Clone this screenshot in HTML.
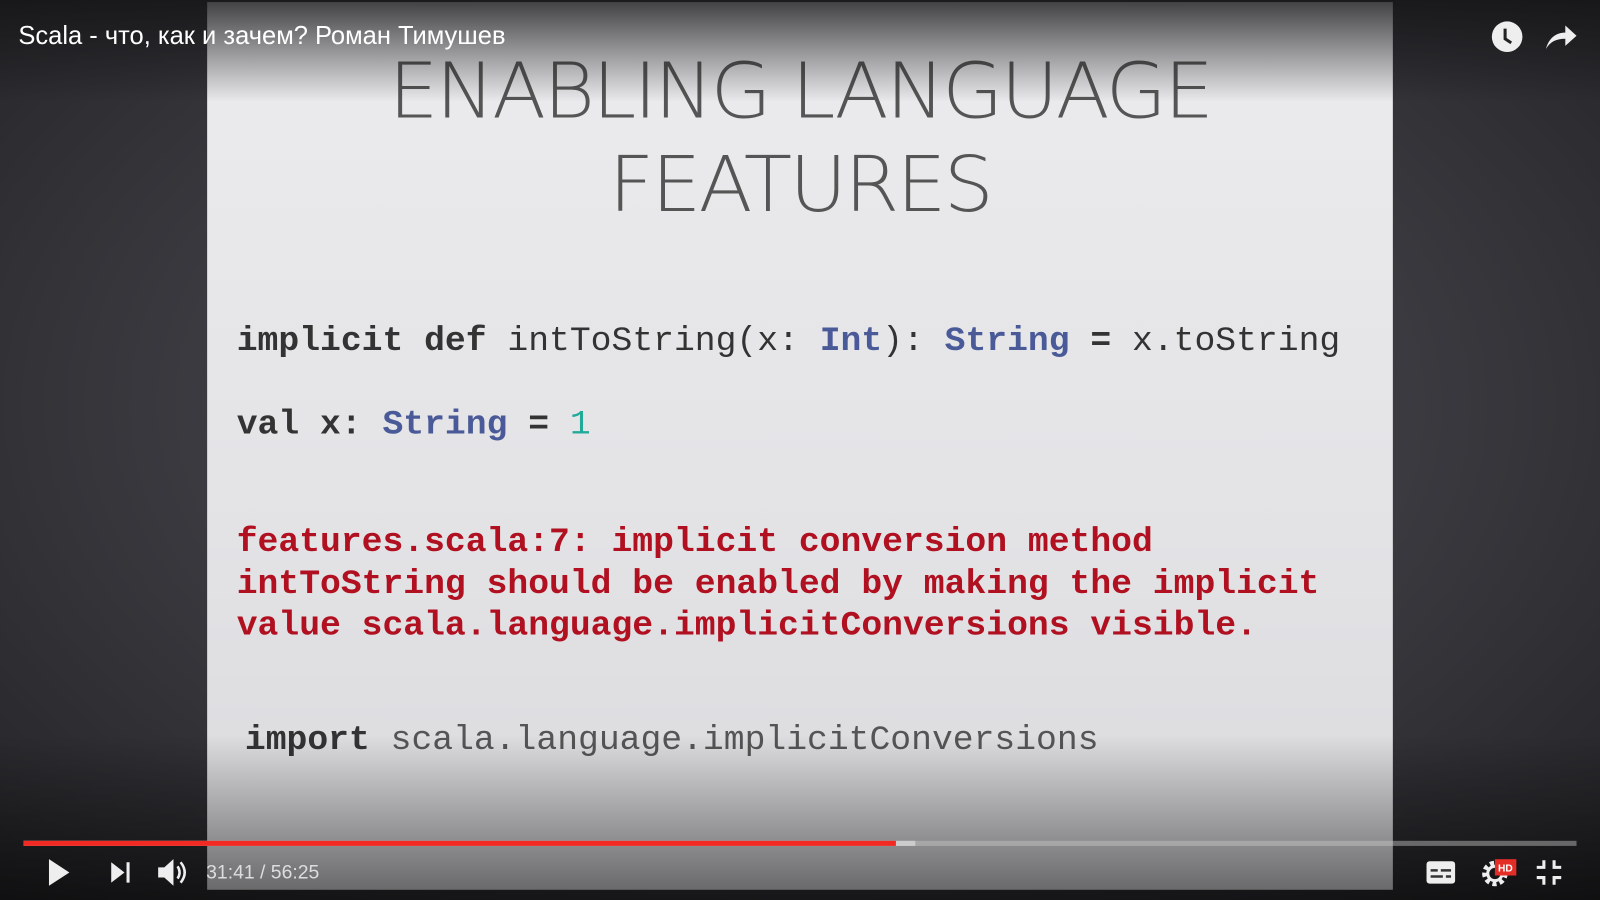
<!DOCTYPE html>
<html><head><meta charset="utf-8"><style>
html,body{margin:0;padding:0;width:1600px;height:900px;overflow:hidden;background:#1a1a1c}
#w{position:absolute;left:0;top:0;width:1568px;height:882px;transform:scale(1.020408);transform-origin:0 0;
background:radial-gradient(ellipse at 50% 45%,#55555a 0%,#3c3c42 50%,#232326 100%);font-family:"Liberation Sans",sans-serif}
#slide{position:absolute;left:203px;top:2px;width:1162px;height:870px;background:linear-gradient(#ececee,#e3e3e6 60%,#dadadd)}
.t{position:absolute;left:0;width:1162px;text-align:center;color:#555;font-family:"DejaVu Sans","Liberation Sans",sans-serif;font-weight:200;font-size:75px;letter-spacing:-2.5px;transform:scaleX(1.03)}
.c{position:absolute;font-family:"Liberation Mono",monospace;font-size:34px;white-space:pre;color:#333}
b{font-weight:bold}
.bl{color:#4a5a98;font-weight:bold}.tl{color:#22aa99}.r{color:#b01020;font-weight:bold}
#topsh{position:absolute;left:0;top:0;width:1568px;height:100px;background:linear-gradient(rgba(20,20,22,.8),rgba(20,20,22,0))}
#botsh{position:absolute;left:0;top:720px;width:1568px;height:162px;background:linear-gradient(rgba(0,0,0,0),rgba(0,0,0,.55))}
#title{position:absolute;left:18px;top:21px;color:#fff;font-size:25px}
.ic{position:absolute}
</style></head><body><div id="w">
<div id="slide">
<div class="t" style="top:43px">ENABLING LANGUAGE</div>
<div class="t" style="top:135px">FEATURES</div>
<div class="c" style="left:29px;top:314px"><b>implicit def</b> intToString(x: <span class="bl">Int</span>): <span class="bl">String</span> <b>=</b> x.toString</div>
<div class="c" style="left:29px;top:396px"><b>val x:</b> <span class="bl">String</span> <b>=</b> <span class="tl">1</span></div>
<div class="c r" style="left:29px;top:510px;line-height:41px">features.scala:7: implicit conversion method
intToString should be enabled by making the implicit
value scala.language.implicitConversions visible.</div>
<div class="c" style="left:37px;top:705px;color:#555"><b style="color:#333">import</b> scala.language.implicitConversions</div>
</div>
<div id="topsh"></div><div id="botsh"></div>
<div id="title">Scala - что, как и зачем? Роман Тимушев</div>
<svg class="ic" style="left:1461px;top:20px" width="32" height="32" viewBox="0 0 32 32"><circle cx="16" cy="16" r="15" fill="#eee"/><path d="M14 8v10l6 4" stroke="#222" stroke-width="3" fill="none"/></svg>
<svg class="ic" style="left:1513px;top:21px" width="34" height="30" viewBox="0 0 34 30"><path d="M2 27C5 16 12 11 21 11V4l11 10-11 10v-7C12 17 6 20 2 27z" fill="#eee"/></svg>
<div style="position:absolute;left:23px;top:824px;width:1522px;height:5px;background:rgba(200,200,200,.45)"></div>
<div style="position:absolute;left:23px;top:824px;width:874px;height:5px;background:#ccc"></div>
<div style="position:absolute;left:23px;top:824px;width:855px;height:5px;background:#f12b24"></div>
<svg class="ic" style="left:44px;top:840px" width="26" height="30"><path d="M4 2l20 13L4 28z" fill="#eee"/></svg>
<svg class="ic" style="left:106px;top:843px" width="24" height="24"><path d="M3 2l13 10L3 22z M18 2h3v20h-3z" fill="#eee"/></svg>
<svg class="ic" style="left:153px;top:840px" width="32" height="30"><path d="M2 10h6l9-8v26l-9-8H2z" fill="#eee"/><path d="M21 9q4 6 0 12M24 5q8 10 0 20" stroke="#eee" stroke-width="2.5" fill="none"/></svg>
<div style="position:absolute;left:202px;top:845px;color:#ddd;font-size:19px">31:41 / 56:25</div>
<svg class="ic" style="left:1397px;top:842px" width="30" height="26"><rect x="1" y="2" width="28" height="22" rx="3" fill="#eee"/><path d="M5 11h7M15 11h10M5 17h12M20 17h5" stroke="#333" stroke-width="2.5"/></svg>
<svg class="ic" style="left:1451px;top:840px" width="36" height="30"><circle cx="14" cy="16" r="10" fill="none" stroke="#eee" stroke-width="5" stroke-dasharray="4 3"/><circle cx="14" cy="16" r="7" fill="none" stroke="#eee" stroke-width="3"/><rect x="14" y="2" width="21" height="16" fill="#e52d27"/><text x="17" y="14" font-size="10" font-weight="bold" fill="#fff" font-family="Liberation Sans">HD</text></svg>
<svg class="ic" style="left:1504px;top:841px" width="28" height="28"><path d="M9 2v7H2M19 2v7h7M9 26v-7H2M19 26v-7h7" stroke="#eee" stroke-width="3" fill="none"/></svg>
</div></body></html>
